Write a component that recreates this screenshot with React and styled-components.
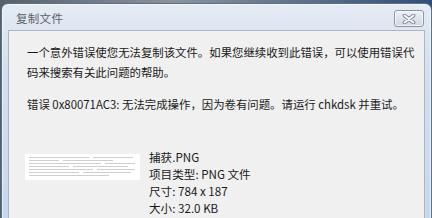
import React from "react";
import styled, { createGlobalStyle } from "styled-components";

const GlobalStyle = createGlobalStyle`
  html, body { margin: 0; padding: 0; }
  body {
    background: #3b5573;
    overflow: hidden;
    font-family: "Noto Sans CJK SC", "Noto Sans", sans-serif;
  }
`;

const Screen = styled.div`
  width: 432px;
  height: 218px;
  overflow: hidden;
  background: linear-gradient(90deg, #56606a 0%, #8a939c 40%, #2f4f78 100%);
`;

const Window = styled.div`
  box-sizing: border-box;
  margin: 3px 0 0 1px;
  width: 431px;
  height: 230px;
  border: 1px solid #5a6f88;
  border-radius: 7px 7px 0 0;
  background: linear-gradient(180deg, #e4ebf3 0%, #d3dfee 30%, #c6d7ec 100%);
  box-shadow: inset 0 0 0 1px rgba(255, 255, 255, 0.6);
  padding: 0 6px;
  display: flex;
  flex-direction: column;
`;

const TitleBar = styled.div`
  height: 26px;
  display: flex;
  align-items: center;
  justify-content: space-between;
  padding: 0 1px 0 8px;
`;

const Title = styled.span`
  font-size: 11.5px;
  color: #5a6068;
  letter-spacing: 0.3px;
  margin-top: 2px;
`;

const CloseButton = styled.div`
  box-sizing: border-box;
  width: 30px;
  height: 17px;
  margin-top: 3px;
  border: 1px solid #8a96a4;
  border-radius: 3px;
  background: linear-gradient(180deg, #eef2f6 0%, #dde4ec 50%, #cfd8e3 100%);
  box-shadow: inset 0 0 0 1px rgba(255, 255, 255, 0.7);
  display: flex;
  align-items: center;
  justify-content: center;
`;

const Content = styled.div`
  flex: 1;
  background: #f0f0f0;
  border: 1px solid #a9b6c5;
  border-bottom: none;
  padding: 11px 2px 0 18px;
  color: #1a1a1a;
  font-size: 11.4px;
`;

const Paragraph = styled.p`
  margin: 0;
  line-height: 20px;
  margin-bottom: ${(p) => p.$gap || 0}px;
`;

const FileRow = styled.div`
  display: flex;
  align-items: flex-start;
  margin-top: 35px;
  margin-left: -2px;
`;

const Thumb = styled.div`
  width: 115px;
  height: 26px;
  margin-top: 5px;
  margin-right: 9px;
  background: #fff;
  display: flex;
`;

const FileInfo = styled.div`
  display: flex;
  flex-direction: column;
  line-height: 17px;
  font-size: 11.6px;
`;

const CloseIcon = () => (
  <svg width="14" height="10" viewBox="0 0 14 10">
    <path d="M2.5 1.5 L11.5 8.5 M11.5 1.5 L2.5 8.5" stroke="#7c8794" strokeWidth="3.8" strokeLinecap="round" />
    <path d="M2.5 1.5 L11.5 8.5 M11.5 1.5 L2.5 8.5" stroke="#ffffff" strokeWidth="1.8" strokeLinecap="round" />
  </svg>
);

const thumbLines = [
  [4, 3, 60], [68, 3, 40], [4, 6, 30], [38, 6, 50], [4, 9, 72], [80, 9, 30],
  [4, 12, 40], [48, 12, 55], [4, 15, 64], [72, 15, 38], [4, 18, 50], [58, 18, 48],
  [4, 21, 80],
];

const ThumbPic = () => (
  <svg width="115" height="26" viewBox="0 0 115 26">
    {thumbLines.map(([x, y, w], i) => (
      <rect key={i} x={x} y={y} width={w} height="1" fill="#a8a8a8" opacity="0.55" />
    ))}
  </svg>
);

export default function App() {
  return (
    <>
      <GlobalStyle />
      <Screen>
        <Window>
          <TitleBar>
            <Title>复制文件</Title>
            <CloseButton>
              <CloseIcon />
            </CloseButton>
          </TitleBar>
          <Content>
            <Paragraph $gap={12}>
              一个意外错误使您无法复制该文件。如果您继续收到此错误，可以使用错误代码来搜索有关此问题的帮助。
            </Paragraph>
            <Paragraph>
              错误 0x80071AC3: 无法完成操作，因为卷有问题。请运行 chkdsk 并重试。
            </Paragraph>
            <FileRow>
              <Thumb>
                <ThumbPic />
              </Thumb>
              <FileInfo>
                <span>捕获.PNG</span>
                <span>项目类型: PNG 文件</span>
                <span>尺寸: 784 x 187</span>
                <span>大小: 32.0 KB</span>
              </FileInfo>
            </FileRow>
          </Content>
        </Window>
      </Screen>
    </>
  );
}
